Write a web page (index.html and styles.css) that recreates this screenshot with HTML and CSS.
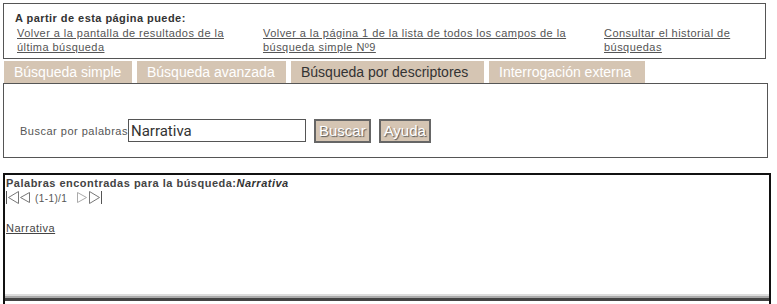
FILE: index.html
```html
<!DOCTYPE html>
<html lang="es">
<head>
<meta charset="utf-8">
<title>Búsqueda por descriptores</title>
<link rel="stylesheet" href="styles.css">
</head>
<body>
<div class="page">
  <div class="options">
    <div class="options-title">A partir de esta página puede:</div>
    <div class="options-links">
      <a href="#">Volver a la pantalla de resultados de la última búsqueda</a>
      <a href="#">Volver a la página 1 de la lista de todos los campos de la búsqueda simple Nº9</a>
      <a href="#">Consultar el historial de búsquedas</a>
    </div>
  </div>

  <div class="tabs">
    <span class="tab">Búsqueda simple</span>
    <span class="tab">Búsqueda avanzada</span>
    <span class="tab active">Búsqueda por descriptores</span>
    <span class="tab">Interrogación externa</span>
  </div>

  <div class="search">
    <label class="search-label" for="q">Buscar por palabras</label>
    <input class="search-input" id="q" type="text" value="Narrativa">
    <button class="btn" type="button">Buscar</button>
    <button class="btn" type="button">Ayuda</button>
  </div>

  <div class="results">
    <div class="results-body">
      <div class="results-title">Palabras encontradas para la búsqueda:<i>Narrativa</i></div>
      <div class="pager">
        <svg class="nav-icon" width="13" height="13" viewBox="0 0 13 13"><line x1="0.5" y1="0" x2="0.5" y2="13" stroke="#555" stroke-width="1"/><polygon points="12.5,0.5 2.5,6.5 12.5,12.5" fill="#fff" stroke="#777" stroke-width="1"/></svg>
        <svg class="nav-icon" width="11" height="13" viewBox="0 0 11 13"><polygon points="9.5,1.5 0.5,6.5 9.5,11.5" fill="#fff" stroke="#777" stroke-width="1"/></svg>
        <span class="pager-text">(1-1)/1</span>
        <svg class="nav-icon" width="11" height="13" viewBox="0 0 11 13"><polygon points="0.5,1.5 9.5,6.5 0.5,11.5" fill="#fff" stroke="#aaa" stroke-width="1"/></svg>
        <svg class="nav-icon" width="13" height="13" viewBox="0 0 13 13"><polygon points="0.5,0.5 10.5,6.5 0.5,12.5" fill="#fff" stroke="#777" stroke-width="1"/><line x1="12.5" y1="0" x2="12.5" y2="13" stroke="#555" stroke-width="1"/></svg>
      </div>
      <a class="result-link" href="#">Narrativa</a>
    </div>
    <div class="frame-edge">
      <div class="edge-light"></div>
      <div class="edge-mid"></div>
      <div class="edge-dark"></div>
    </div>
  </div>
</div>
</body>
</html>
```

FILE: styles.css
```css
html, body {
  margin: 0;
  padding: 0;
  background: #fff;
}

body {
  font-family: "Liberation Sans", Arial, sans-serif;
  color: #444;
}

.page {
  padding: 3px 0 0 3px;
  width: 768px;
}

.options {
  width: 763px;
  height: 56px;
  box-sizing: border-box;
  border: 1px solid #555;
  padding-top: 8px;
}

.options-title {
  font-size: 11px;
  font-weight: bold;
  color: #333;
  padding-left: 11px;
  line-height: 13px;
  letter-spacing: 0.45px;
}

.options-links {
  display: grid;
  grid-template-columns: 246px 341px 135px;
  padding-left: 13px;
  margin-top: 1px;
}

.options-links a {
  font-size: 11px;
  line-height: 14px;
  color: #555;
  text-decoration: underline;
  letter-spacing: 0.45px;
  padding-right: 12px;
}

.options-links a:last-child {
  padding-right: 0;
}

.tabs {
  display: flex;
  gap: 5px;
  margin-top: 2px;
  padding-left: 1px;
}

.tab {
  background: #d5c5b3;
  color: #fff;
  font-size: 14px;
  line-height: 22px;
  height: 22px;
  padding: 0 10px;
}

.tab:nth-child(1) { width: 108px; }
.tab:nth-child(2) { width: 129px; }
.tab:nth-child(3) { width: 173px; color: #333; }
.tab:nth-child(4) { width: 136px; }

.search {
  width: 765px;
  height: 75px;
  box-sizing: border-box;
  border: 1px solid #555;
  display: flex;
  align-items: center;
  padding-top: 20px;
}

.search-label {
  font-size: 11px;
  color: #555;
  margin-left: 16px;
  letter-spacing: 0.5px;
}

.search-input {
  width: 178px;
  height: 23px;
  box-sizing: border-box;
  border: 1px solid #555;
  padding: 0 2px;
  margin: 0 8px 0 0;
  font-family: Roboto, "Liberation Sans", sans-serif;
  font-size: 15px;
  color: #333;
  background: #fff;
}

.btn {
  height: 24px;
  box-sizing: border-box;
  background: #d5c5b3;
  border: 2px solid #666;
  color: #fff;
  font-family: "Liberation Sans", Arial, sans-serif;
  font-size: 15px;
  padding: 0 3px;
  margin-right: 8px;
  text-shadow: 1px 1px 1px #555;
}

.results {
  margin-top: 15px;
  width: 768px;
  height: 131px;
  border: 2px solid #111;
  border-bottom: none;
  box-sizing: border-box;
  display: flex;
  flex-direction: column;
}

.results-body {
  flex: 1;
  padding: 2px 0 0 1px;
}

.results-title {
  font-size: 11px;
  font-weight: bold;
  color: #444;
  line-height: 13px;
  letter-spacing: 0.5px;
}

.results-title i {
  color: #333;
}

.pager {
  display: flex;
  align-items: center;
  height: 14px;
}

.nav-icon {
  display: block;
  margin-right: 1px;
}

.pager-text {
  font-size: 10px;
  color: #555;
  margin: 3px 10px 0 3px;
  letter-spacing: 0.4px;
}

.result-link {
  display: inline-block;
  margin-top: 18px;
  font-size: 11px;
  color: #444;
  text-decoration: underline;
  letter-spacing: 0.5px;
}

.frame-edge {
  margin-bottom: 3px;
}

.edge-light { height: 2px; background: #ddd; }
.edge-mid { height: 2px; background: #aaa; }
.edge-dark { height: 3px; background: #444; }
```
